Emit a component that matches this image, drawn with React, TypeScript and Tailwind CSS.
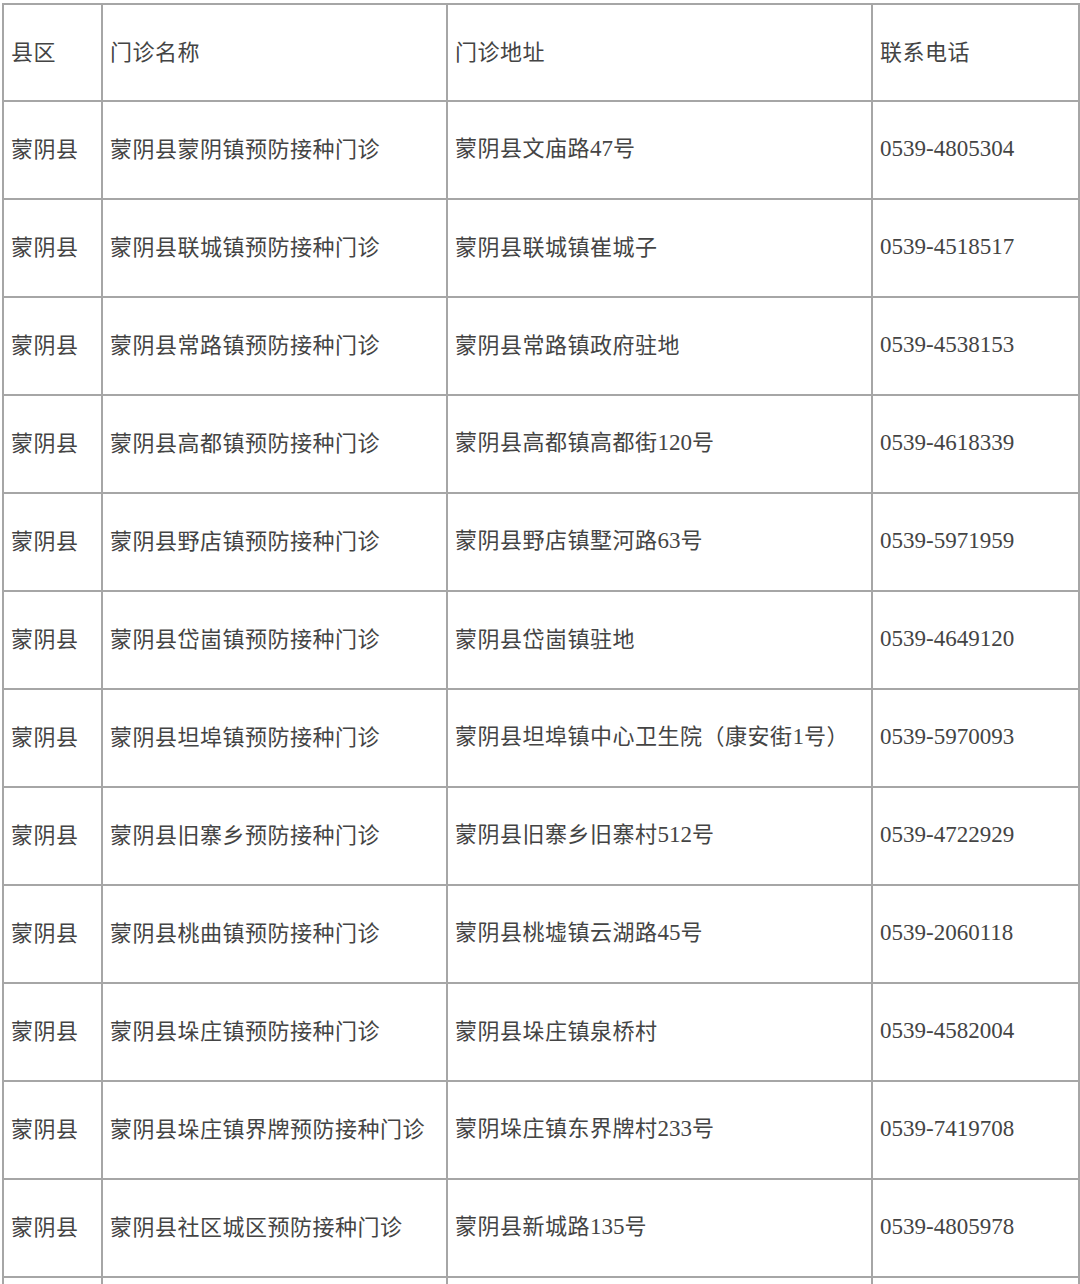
const rows: [string, string, string, string][] = [
  ['蒙阴县', '蒙阴县蒙阴镇预防接种门诊', '蒙阴县文庙路47号', '0539-4805304'],
  ['蒙阴县', '蒙阴县联城镇预防接种门诊', '蒙阴县联城镇崔城子', '0539-4518517'],
  ['蒙阴县', '蒙阴县常路镇预防接种门诊', '蒙阴县常路镇政府驻地', '0539-4538153'],
  ['蒙阴县', '蒙阴县高都镇预防接种门诊', '蒙阴县高都镇高都街120号', '0539-4618339'],
  ['蒙阴县', '蒙阴县野店镇预防接种门诊', '蒙阴县野店镇墅河路63号', '0539-5971959'],
  ['蒙阴县', '蒙阴县岱崮镇预防接种门诊', '蒙阴县岱崮镇驻地', '0539-4649120'],
  ['蒙阴县', '蒙阴县坦埠镇预防接种门诊', '蒙阴县坦埠镇中心卫生院（康安街1号）', '0539-5970093'],
  ['蒙阴县', '蒙阴县旧寨乡预防接种门诊', '蒙阴县旧寨乡旧寨村512号', '0539-4722929'],
  ['蒙阴县', '蒙阴县桃曲镇预防接种门诊', '蒙阴县桃墟镇云湖路45号', '0539-2060118'],
  ['蒙阴县', '蒙阴县垛庄镇预防接种门诊', '蒙阴县垛庄镇泉桥村', '0539-4582004'],
  ['蒙阴县', '蒙阴县垛庄镇界牌预防接种门诊', '蒙阴垛庄镇东界牌村233号', '0539-7419708'],
  ['蒙阴县', '蒙阴县社区城区预防接种门诊', '蒙阴县新城路135号', '0539-4805978'],
];

// digits in the source look like SimSun half-width serif numerals
function Cell({ text }: { text: string }) {
  const parts = text.split(/([0-9\-]+)/);
  return (
    <>
      {parts.map((p, i) =>
        /^[0-9\-]+$/.test(p) ? (
          <span key={i} className="text-[23px] tracking-normal font-['Liberation_Serif',serif]">
            {p}
          </span>
        ) : (
          <span key={i}>{p}</span>
        )
      )}
    </>
  );
}

const td = 'border-2 border-[#a6a6a6] pl-[7px] pr-1 pb-[6px] align-middle whitespace-nowrap';

export default function App() {
  return (
    <div className="w-[1080px] h-[1284px] overflow-hidden bg-white pl-[2px] pt-[3px]">
      <table className="table-fixed border-collapse w-[1076px] text-[22px] tracking-[0.5px] text-[#444444] font-['Noto_Sans_CJK_SC',sans-serif] leading-none">
        <colgroup>
          <col className="w-[99px]" />
          <col className="w-[345px]" />
          <col className="w-[425px]" />
          <col className="w-[207px]" />
        </colgroup>
        <tbody>
          <tr className="h-[97px]">
            <td className={td}>县区</td>
            <td className={td}>门诊名称</td>
            <td className={td}>门诊地址</td>
            <td className={td}>联系电话</td>
          </tr>
          {rows.map((r, i) => (
            <tr key={i} className="h-[98px]">
              {r.map((c, j) => (
                <td key={j} className={td}>
                  <Cell text={c} />
                </td>
              ))}
            </tr>
          ))}
          <tr className="h-[98px]">
            <td className={td}></td>
            <td className={td}></td>
            <td className={td}></td>
            <td className={td}></td>
          </tr>
        </tbody>
      </table>
    </div>
  );
}
